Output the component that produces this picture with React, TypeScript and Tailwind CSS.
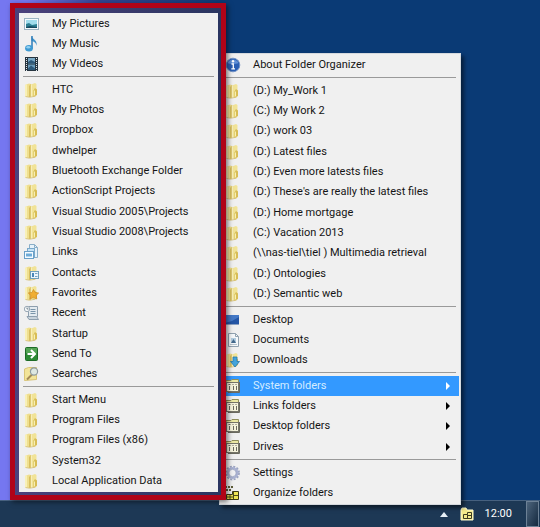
import { ReactNode } from 'react';
import clsx from 'clsx';

type IconName =
  | 'pictures' | 'music' | 'videos' | 'folder' | 'links' | 'contacts' | 'favorites' | 'recent'
  | 'sendTo' | 'searches' | 'info' | 'desktop' | 'document' | 'downloads' | 'tree' | 'gear' | 'organize';

interface Item {
  label: string;
  icon: IconName;
  submenu?: boolean;
  active?: boolean;
}

const folders = (...labels: string[]): Item[] => labels.map((label) => ({ label, icon: 'folder' }));

const systemGroups: Item[][] = [
  [
    { label: 'My Pictures', icon: 'pictures' },
    { label: 'My Music', icon: 'music' },
    { label: 'My Videos', icon: 'videos' },
  ],
  [
    ...folders(
      'HTC',
      'My Photos',
      'Dropbox',
      'dwhelper',
      'Bluetooth Exchange Folder',
      'ActionScript Projects',
      'Visual Studio 2005\\Projects',
      'Visual Studio 2008\\Projects',
    ),
    { label: 'Links', icon: 'links' },
    { label: 'Contacts', icon: 'contacts' },
    { label: 'Favorites', icon: 'favorites' },
    { label: 'Recent', icon: 'recent' },
    { label: 'Startup', icon: 'folder' },
    { label: 'Send To', icon: 'sendTo' },
    { label: 'Searches', icon: 'searches' },
  ],
  folders('Start Menu', 'Program Files', 'Program Files (x86)', 'System32', 'Local Application Data'),
];

const mainGroups: Item[][] = [
  [{ label: 'About Folder Organizer', icon: 'info' }],
  folders(
    '(D:) My_Work 1',
    '(C:) My Work 2',
    '(D:) work 03',
    '(D:) Latest files',
    '(D:) Even more latests files',
    "(D:) These's are really the latest files",
    '(D:) Home mortgage',
    '(C:) Vacation 2013',
    '(\\\\nas-tiel\\tiel ) Multimedia retrieval',
    '(D:) Ontologies',
    '(D:) Semantic web',
  ),
  [
    { label: 'Desktop', icon: 'desktop' },
    { label: 'Documents', icon: 'document' },
    { label: 'Downloads', icon: 'downloads' },
  ],
  [
    { label: 'System folders', icon: 'tree', submenu: true, active: true },
    { label: 'Links folders', icon: 'tree', submenu: true },
    { label: 'Desktop folders', icon: 'tree', submenu: true },
    { label: 'Drives', icon: 'tree', submenu: true },
  ],
  [
    { label: 'Settings', icon: 'gear' },
    { label: 'Organize folders', icon: 'organize' },
  ],
];

const folderBody = (
  <>
    <path d="M1 3l4-1.500 2 .500v12.500l-2 .500-4-1z" fill="#efdf8f" />
    <path d="M1 3l2-.700v12l-2-.300z" fill="#f8f0b8" />
    <path d="M5 4l2-2v12.500l-2 .500z" fill="#d9c060" />
    <path d="M7 2.500L11 1l1.500 1v5l.500 1v5L10 14.500l-3-.500z" fill="#f1e397" />
    <path d="M9.500 8.500L11 6l2 1.500V13l-3.500 1.500z" fill="#d8bd55" />
    <path d="M10.500 8.500v5" stroke="#f7efb5" />
    <path d="M7.300 3v11" stroke="#fbf5cd" strokeWidth=".8" />
    <path d="M1.500 14.500l4 .700 6-1" stroke="#d0b65c" strokeWidth=".7" fill="none" />
  </>
);

const icons: Record<IconName, ReactNode> = {
  folder: folderBody,
  pictures: (
    <>
      <rect x=".5" y="2.500" width="14" height="11" fill="#f4f9fb" stroke="#9cb4c2" />
      <rect x="2" y="4" width="11" height="8" fill="#9fdcec" />
      <path d="M2 8l3-1 3 2 5-1v4H2z" fill="#2b7f92" />
      <path d="M2 11l4-1 7 1v1H2z" fill="#164a60" />
    </>
  ),
  music: (
    <>
      <path d="M7.500 0c.800 3.500 6.500 4 5 10 0-3-2.500-4.500-5-5z" fill="#4495cb" />
      <path d="M8 0v12.500" stroke="#2e7db8" strokeWidth="1.500" />
      <ellipse cx="5" cy="12.200" rx="3.900" ry="3.300" fill="#3e9ad2" />
      <ellipse cx="4.300" cy="11.200" rx="2" ry="1.200" fill="#93d0f0" />
    </>
  ),
  videos: (
    <>
      <rect x="1" y="1" width="13" height="14" fill="#26343f" />
      <rect x="4" y="2" width="7" height="5.500" fill="#79a9c6" />
      <rect x="4" y="8.500" width="7" height="5.500" fill="#6b9dbd" />
      <path d="M4 6l3-2 4 2v1.500H4zM4 12.500l3-3 4 3V14H4z" fill="#2d597a" />
      <path d="M2.500 2v13M12.500 2v13" stroke="#e3eaee" strokeDasharray="1 1" />
    </>
  ),
  links: (
    <>
      <path d="M5.500 .5h5l3 3v10h-8z" fill="#e6f2fa" stroke="#8aaec8" />
      <path d="M10.500 .5v3h3" fill="none" stroke="#8aaec8" />
      <rect x="3.500" y="4.500" width="7" height="9" fill="#c4e1f4" stroke="#7aa9cb" />
      <rect x=".5" y="7.500" width="9" height="7" fill="#f4fbff" stroke="#6aa0c8" />
      <path d="M2 9.500h6v3H2z" fill="#6dabd8" />
    </>
  ),
  contacts: (
    <>
      {folderBody}
      <rect x="6.500" y="6.500" width="8" height="7" fill="#e9f5fc" stroke="#6e9fba" />
      <rect x="8" y="8" width="2" height="4" fill="#4787b8" />
      <path d="M11 8.500h2.500M11 11.500h2.500" stroke="#7aa5c0" />
    </>
  ),
  favorites: (
    <>
      {folderBody}
      <path d="M9.500 4.500l1.600 3 3.600.500-2.600 2.400.700 3.600-3.300-1.700-3.300 1.700.700-3.600L4.300 8l3.600-.500z" fill="#f0ae32" stroke="#cf8b22" strokeWidth=".7" />
    </>
  ),
  recent: (
    <>
      <path d="M4.500 1.500h9v10h-9z" fill="#e4ebf0" stroke="#8e9fae" />
      <path d="M3 11.500h9.500l2 3H5z" fill="#c8d3dc" stroke="#8e9fae" />
      <path d="M6.500 4.500h5M6.500 6.500h5M6.500 8.500h5" stroke="#7b95aa" />
      <circle cx="3" cy="4" r="2.700" fill="#f2f5f7" stroke="#9aa8b4" />
      <path d="M3 2.500V4h1.500" fill="none" stroke="#5c6e7c" strokeWidth=".8" />
    </>
  ),
  sendTo: (
    <>
      <rect x="1.500" y="1.500" width="12" height="13" rx="1" fill="#2c8a34" stroke="#1d6b26" />
      <path d="M2 2h11v5H2z" fill="#52a353" />
      <path d="M3.500 8h7M7 4l4 4-4 4" fill="none" stroke="#fff" strokeWidth="2" />
    </>
  ),
  searches: (
    <>
      <path d="M.5 3l4-1.500h8v12l-12 1z" fill="#f2e498" stroke="#d9c478" />
      <path d="M8 8.500l-5 5" stroke="#a48a55" strokeWidth="2" />
      <circle cx="10" cy="5.500" r="3.600" fill="#dde8e2" stroke="#8e9ba0" strokeWidth="1.200" />
    </>
  ),
  info: (
    <>
      <circle cx="8" cy="8" r="6.800" fill="#2a5fb4" stroke="#7393c6" />
      <path d="M2.500 6a6 6 0 0111 0c-3 1.500-8 1.500-11 0z" fill="#5f8fd6" />
      <circle cx="8" cy="4.300" r="1.200" fill="#fff" />
      <path d="M6.500 7h1.800v4.500M6.300 11.800h3.700" stroke="#fff" strokeWidth="1.300" fill="none" />
    </>
  ),
  desktop: (
    <>
      <rect x="0" y="3" width="14" height="10" fill="#2455a5" />
      <path d="M0 3h14v2L7 9l-7 2z" fill="#4378c6" />
      <path d="M0 12.500h14" stroke="#8ba1c1" />
    </>
  ),
  document: (
    <>
      <path d="M3.500 1.500h7l3 3v10h-10z" fill="#f5f8fa" stroke="#91a2b0" />
      <path d="M10.500 1.500v3h3" fill="none" stroke="#91a2b0" />
      <rect x="6" y="6" width="5" height="5" fill="#b3cde0" />
      <path d="M6 11l2.500-4 2.500 4z" fill="#44698c" />
      <path d="M5 12.500h7" stroke="#b7c3cc" />
    </>
  ),
  downloads: (
    <>
      {folderBody}
      <path d="M8 5h4v4.500h2.500L10 15 5.500 9.500H8z" fill="#43a4dc" stroke="#2378ad" strokeWidth=".8" />
    </>
  ),
  tree: (
    <>
      <path d="M1 4.500V2.500h5l1-1h6.500v3" fill="#ece9a4" stroke="#908e5a" />
      <rect x="1.500" y="4.500" width="12" height="9" fill="#f6f4dc" stroke="#77766a" />
      <path d="M14.500 4v10.500H3" fill="none" stroke="#69695e" />
      <path d="M3.500 6.500h2M7.500 6.500h1M10.500 6.500h1M4.500 8v4M8.500 8v4M11.500 8v4" stroke="#6c6b60" />
    </>
  ),
  gear: (
    <>
      <circle cx="7.500" cy="8" r="6.500" fill="none" stroke="#9aa3c0" strokeWidth="1.800" strokeDasharray="2 1.400" />
      <circle cx="7.500" cy="8" r="4.800" fill="none" stroke="#a9b1d2" strokeWidth="2.300" />
      <circle cx="7.500" cy="8" r="3.700" fill="#f1f1f4" stroke="#8590b4" strokeWidth=".7" />
    </>
  ),
  organize: (
    <>
      <path d="M0 1h2v2H0zM3 1h2v2H3zM6 1h2v2H6zM1 4h2v2H1zM4 4h2v2H4z" fill="#5e5d38" />
      <path d="M1.500 9.500h6v-3h6v8h-12z" fill="#efe653" stroke="#3c3b16" />
      <path d="M5 10v4.500M8.500 7v7M2 12h6M8.500 10.500h5" stroke="#3c3b16" strokeWidth=".9" />
    </>
  ),
};

function Icon({ name }: { name: IconName }) {
  return (
    <svg viewBox="0 0 16 16" className="size-4 shrink-0" aria-hidden="true">
      {icons[name]}
    </svg>
  );
}

function MenuItem({ item }: { item: Item }) {
  return (
    <li className="flex h-5 nth-[3n+4]:h-[21px]">
      <button
        type="button"
        className={clsx(
          'flex w-full items-center gap-3 pl-1 pr-2 text-left whitespace-nowrap',
          item.active ? 'bg-[#3399ff] text-[#d4ecff]' : 'text-[#151515]',
        )}
      >
        <Icon name={item.icon} />
        <span className="flex-1">{item.label}</span>
        {item.submenu && (
          <svg viewBox="0 0 4 8" className="mr-px h-2 w-1" fill={item.active ? '#fff' : '#000'} aria-hidden="true">
            <path d="M0 0l4 4-4 4z" />
          </svg>
        )}
      </button>
    </li>
  );
}

function Menu({ groups, label }: { groups: Item[][]; label: string }) {
  return (
    <nav aria-label={label} className="bg-[#f0f0f0] p-px text-[11px] leading-4">
      {groups.map((group, i) => (
        <div key={i}>
          {i > 0 && <hr className="mx-[3px] mt-[2px] mb-[3px] border-[#9a9a9a]" />}
          <ul>
            {group.map((item) => (
              <MenuItem key={item.label} item={item} />
            ))}
          </ul>
        </div>
      ))}
    </nav>
  );
}

function Taskbar() {
  return (
    <footer className="flex h-[27px] items-center justify-end border-t border-[#47617f] bg-[#1d3855] text-[11px] text-white">
      <button type="button" aria-label="Show hidden icons" className="mr-3">
        <svg viewBox="0 0 8 5" className="h-[5px] w-2" fill="#e6eff7">
          <path d="M4 0l4 5H0z" />
        </svg>
      </button>
      <button type="button" aria-label="Folder Organizer" className="mr-[11px]">
        <svg viewBox="0 0 14 14" className="size-[14px]">
          <path d="M1 3l1-2h4l1 2h6v10H1z" fill="#f4eb8c" stroke="#fffbd0" />
          <path d="M3.500 7.500h4v-2h4v6h-8zM7.500 7.500v4M7.500 8.500h4" fill="none" stroke="#3d3c20" />
        </svg>
      </button>
      <time className="mr-[14px]">12:00</time>
      <button
        type="button"
        aria-label="Show desktop"
        className="mr-px h-full w-[13px] border border-[#6d8196] bg-linear-to-br from-[#4d647c] to-[#152a40]"
      />
    </footer>
  );
}

export default function App() {
  return (
    <div className="relative flex min-h-screen flex-col overflow-hidden bg-[#0a3a75] font-[Roboto,'Noto_Sans',sans-serif]">
      <main className="flex flex-1 bg-linear-to-r from-[#7577f0] from-[26px] via-[#33438f] via-[100px] to-[#0a3a75] to-[220px]" />
      <Taskbar />
      <div className="absolute top-[53px] left-[219px] w-[242px] border border-[#d5d9de] shadow-[3px_3px_4px_rgba(0,0,0,0.5)]">
        <Menu groups={mainGroups} label="Folder Organizer" />
      </div>
      <div className="absolute top-[3px] left-[10px] w-[216px] border-5 border-[#b00318] bg-linear-to-r from-[#4b417c] to-[#2a3560] pt-[5px] pr-[3px] pb-[3px] pl-1 shadow-[2px_2px_5px_rgba(0,0,0,0.5)]">
        <Menu groups={systemGroups} label="System folders" />
      </div>
    </div>
  );
}
